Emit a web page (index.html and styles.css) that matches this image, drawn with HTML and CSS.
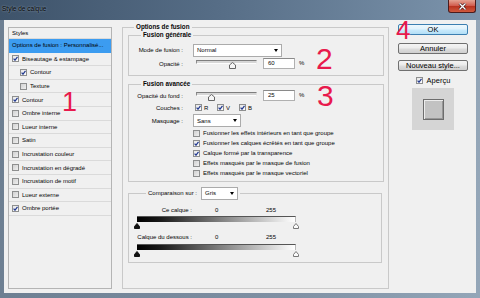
FILE: index.html
```html
<!DOCTYPE html>
<html lang="fr">
<head>
    <meta charset="UTF-8">
    <meta name="viewport" content="width=device-width, initial-scale=1.0">
    <title>Style de calque</title>
    <link rel="stylesheet" href="styles.css">
</head>
<body>
    <div class="window">
        <div class="titlebar">
            <span class="title">Style de calque</span>
            <span class="close">
                <svg width="9" height="7" viewBox="0 0 9 7"><path d="M1.5 0.5 L7.5 6.5 M7.5 0.5 L1.5 6.5" stroke="#3a1010" stroke-width="2.6"/><path d="M1.5 0.5 L7.5 6.5 M7.5 0.5 L1.5 6.5" stroke="#fff" stroke-width="1.4"/></svg>
            </span>
        </div>

        <div class="client">
            <ul class="style-list">
                <li class="list-head">Styles</li>
                <li class="selected">Options de fusion : Personnalisé...</li>
                <li><span class="cb"><svg viewBox="0 0 5 5"><path d="M0.6 2.6 L2 4.2 L4.5 0.8"/></svg></span>Biseautage &amp; estampage</li>
                <li class="sub"><span class="cb"><svg viewBox="0 0 5 5"><path d="M0.6 2.6 L2 4.2 L4.5 0.8"/></svg></span>Contour</li>
                <li class="sub"><span class="cb empty"></span>Texture</li>
                <li><span class="cb"><svg viewBox="0 0 5 5"><path d="M0.6 2.6 L2 4.2 L4.5 0.8"/></svg></span>Contour</li>
                <li><span class="cb empty"></span>Ombre interne</li>
                <li><span class="cb empty"></span>Lueur interne</li>
                <li><span class="cb empty"></span>Satin</li>
                <li><span class="cb empty"></span>Incrustation couleur</li>
                <li><span class="cb empty"></span>Incrustation en dégradé</li>
                <li><span class="cb empty"></span>Incrustation de motif</li>
                <li><span class="cb empty"></span>Lueur externe</li>
                <li><span class="cb"><svg viewBox="0 0 5 5"><path d="M0.6 2.6 L2 4.2 L4.5 0.8"/></svg></span>Ombre portée</li>
            </ul>

            <fieldset class="group outer">
                <legend>Options de fusion</legend>

                <fieldset class="group general">
                    <legend>Fusion générale</legend>
                    <div class="form-grid">
                        <label>Mode de fusion :</label>
                        <div class="select select-normal">Normal<span class="arrow"></span></div>
                        <label>Opacité :</label>
                        <div class="slider-row">
                            <div class="slider">
                                <span class="thumb" style="left: 60%"><svg width="7" height="7" viewBox="0 0 7 7"><path d="M3.5 0.5 L6.5 3 L6.5 6.5 L0.5 6.5 L0.5 3 Z"/></svg></span>
                            </div>
                            <div class="field">60</div>
                            <span class="unit">%</span>
                        </div>
                    </div>
                </fieldset>

                <fieldset class="group advanced">
                    <legend>Fusion avancée</legend>
                    <div class="form-grid">
                        <label>Opacité du fond :</label>
                        <div class="slider-row">
                            <div class="slider">
                                <span class="thumb" style="left: 25%"><svg width="7" height="7" viewBox="0 0 7 7"><path d="M3.5 0.5 L6.5 3 L6.5 6.5 L0.5 6.5 L0.5 3 Z"/></svg></span>
                            </div>
                            <div class="field">25</div>
                            <span class="unit">%</span>
                        </div>
                        <label>Couches :</label>
                        <div class="channels">
                            <span class="check"><span class="cb"><svg viewBox="0 0 5 5"><path d="M0.6 2.6 L2 4.2 L4.5 0.8"/></svg></span>R</span>
                            <span class="check"><span class="cb"><svg viewBox="0 0 5 5"><path d="M0.6 2.6 L2 4.2 L4.5 0.8"/></svg></span>V</span>
                            <span class="check"><span class="cb"><svg viewBox="0 0 5 5"><path d="M0.6 2.6 L2 4.2 L4.5 0.8"/></svg></span>B</span>
                        </div>
                        <label>Masquage :</label>
                        <div class="select select-sans">Sans<span class="arrow"></span></div>
                        <div class="option"><span class="cb empty"></span>Fusionner les effets intérieurs en tant que groupe</div>
                        <div class="option"><span class="cb"><svg viewBox="0 0 5 5"><path d="M0.6 2.6 L2 4.2 L4.5 0.8"/></svg></span>Fusionner les calques écrêtés en tant que groupe</div>
                        <div class="option"><span class="cb"><svg viewBox="0 0 5 5"><path d="M0.6 2.6 L2 4.2 L4.5 0.8"/></svg></span>Calque formé par la transparence</div>
                        <div class="option"><span class="cb empty"></span>Effets masqués par le masque de fusion</div>
                        <div class="option"><span class="cb empty"></span>Effets masqués par le masque vectoriel</div>
                    </div>
                </fieldset>

                <fieldset class="group compare">
                    <legend>
                        <span>Comparaison sur :</span>
                        <div class="select select-gris">Gris<span class="arrow"></span></div>
                    </legend>
                    <div class="blend-row">
                        <span class="blend-label">Ce calque :</span>
                        <span class="blend-min">0</span>
                        <span>255</span>
                    </div>
                    <div class="ramp"></div>
                    <div class="ramp-marks">
                        <svg width="6" height="6" viewBox="0 0 6 6"><path class="mark-dark" d="M3 0.5 L5.5 3.5 L5.5 5.5 L0.5 5.5 L0.5 3.5 Z"/></svg>
                        <svg width="6" height="6" viewBox="0 0 6 6"><path class="mark-light" d="M3 0.5 L5.5 3.5 L5.5 5.5 L0.5 5.5 L0.5 3.5 Z"/></svg>
                    </div>
                    <div class="blend-row second">
                        <span class="blend-label">Calque du dessous :</span>
                        <span class="blend-min">0</span>
                        <span>255</span>
                    </div>
                    <div class="ramp second"></div>
                    <div class="ramp-marks">
                        <svg width="6" height="6" viewBox="0 0 6 6"><path class="mark-dark" d="M3 0.5 L5.5 3.5 L5.5 5.5 L0.5 5.5 L0.5 3.5 Z"/></svg>
                        <svg width="6" height="6" viewBox="0 0 6 6"><path class="mark-light" d="M3 0.5 L5.5 3.5 L5.5 5.5 L0.5 5.5 L0.5 3.5 Z"/></svg>
                    </div>
                </fieldset>
            </fieldset>

            <div class="actions">
                <button class="btn btn-default">OK</button>
                <button class="btn btn-cancel">Annuler</button>
                <button class="btn btn-new">Nouveau style...</button>
                <div class="preview-toggle"><span class="cb"><svg viewBox="0 0 5 5"><path d="M0.6 2.6 L2 4.2 L4.5 0.8"/></svg></span>Aperçu</div>
                <div class="preview"><div class="preview-swatch"></div></div>
            </div>
        </div>

        <span class="mark mark-1">1</span>
        <span class="mark mark-2">2</span>
        <span class="mark mark-3">3</span>
        <span class="mark mark-4">4</span>
    </div>
</body>
</html>
```

FILE: styles.css
```css
* {
    margin: 0;
    padding: 0;
    box-sizing: border-box;
}

body {
    font-family: 'Liberation Sans', Arial, sans-serif;
    font-size: 6px;
    color: #050505;
    background-color: #5f7287;
    width: 480px;
    height: 298px;
    overflow: hidden;
}

.window {
    position: relative;
    width: 480px;
    height: 298px;
    display: flex;
    flex-direction: column;
    background: linear-gradient(90deg, #6d7f92, #7f91a4 60%, #94a6b8);
}

/* title bar */

.titlebar {
    height: 20px;
    display: flex;
    justify-content: space-between;
    align-items: flex-start;
    padding-left: 2px;
    background: linear-gradient(90deg, #3e536a 0%, #566d86 45%, #7c94ac 100%);
}

.title {
    font-size: 6.5px;
    line-height: 17px;
    color: #000;
    text-shadow: 0 0 2px rgba(220, 230, 240, 0.7);
}

.close {
    width: 28px;
    height: 13px;
    margin-right: 4px;
    display: flex;
    align-items: center;
    justify-content: center;
    border: 1px solid #4b1c1c;
    border-top: none;
    border-radius: 0 0 3px 3px;
    background: linear-gradient(#e4a393, #d0594a 50%, #b8321f 51%, #cf5a3e);
}

/* client area */

.client {
    flex: 1;
    display: flex;
    margin: 0 4px 5px 4px;
    padding: 3px 8px 4px 4px;
    background-color: #f0f0f0;
}

.style-list {
    list-style: none;
    width: 104px;
    margin-top: 4px;
    border: 1px solid #b4b4b4;
    background-color: #f0f0f0;
}

.style-list li {
    height: 13.6px;
    display: flex;
    align-items: center;
    gap: 3px;
    padding-left: 3px;
    border-bottom: 1px solid #dadada;
    white-space: nowrap;
}

.style-list .list-head {
    height: 11px;
}

.style-list .selected {
    background-color: #3c9cf0;
    border-bottom-color: #3c9cf0;
    color: #000;
}

.style-list .sub {
    padding-left: 11px;
}

/* checkboxes */

.cb {
    width: 7px;
    height: 7px;
    flex-shrink: 0;
    display: flex;
    align-items: center;
    justify-content: center;
    border: 1px solid #8e8f8f;
    background: linear-gradient(135deg, #e6e6e6, #fdfdfd);
}

.cb.empty {
    background: linear-gradient(135deg, #d2d2d2, #efefef);
}

.cb svg {
    width: 5px;
    height: 5px;
}

.cb path {
    fill: none;
    stroke: #22398f;
    stroke-width: 1.2;
}

/* group boxes */

.group {
    border: 1px solid #c9c9c9;
    padding: 0;
    min-width: 0;
}

.group legend {
    font-weight: bold;
    font-size: 6.3px;
    line-height: 8px;
    padding: 0 2px;
    margin-left: 12px;
}

.outer {
    width: 267px;
    margin-left: 10px;
    padding: 0 4px 0 5px;
}

.outer > legend {
    margin-left: 6px;
}

.general {
    padding: 4px 0 5px 0;
}

.advanced {
    margin-top: 4px;
    padding: 2px 0 3px 0;
}

.form-grid {
    display: grid;
    grid-template-columns: 54px 1fr;
    column-gap: 10px;
    align-items: center;
}

.general .form-grid {
    grid-template-rows: 14px 12px;
    row-gap: 1px;
}

.advanced .form-grid {
    grid-template-rows: 12px 11px 15px repeat(5, 10px);
}

.form-grid > label {
    text-align: right;
    white-space: nowrap;
}

.select {
    height: 13px;
    display: flex;
    align-items: center;
    justify-content: space-between;
    padding: 0 3px 0 3px;
    background-color: #fff;
    border: 1px solid #ababab;
}

.select-normal {
    width: 89px;
}

.select-sans {
    width: 48px;
}

.select-gris {
    width: 37px;
    font-weight: normal;
}

.arrow {
    width: 0;
    height: 0;
    border-left: 2.5px solid transparent;
    border-right: 2.5px solid transparent;
    border-top: 3px solid #000;
}

.slider-row {
    height: 12px;
    display: flex;
    align-items: flex-start;
}

.slider {
    position: relative;
    width: 61px;
    height: 4px;
    margin: 2px 0 0 3px;
    border: 1px solid;
    border-color: #7e7e7e #e2e2e2 #fdfdfd #8c8c8c;
    background-color: #d6d6d6;
}

.thumb {
    position: absolute;
    top: 1px;
    width: 7px;
    height: 7px;
    margin-left: -3.5px;
}

.thumb path {
    fill: #f6f6f6;
    stroke: #666;
    stroke-width: 1;
}

.field {
    width: 32px;
    height: 11px;
    margin-left: 6px;
    padding-left: 4px;
    line-height: 9px;
    background-color: #fff;
    border: 1px solid #b0b0b0;
    border-top-color: #8a8a8a;
}

.unit {
    margin-left: 4px;
    line-height: 11px;
}

.channels {
    display: flex;
    padding-left: 2px;
}

.check {
    display: flex;
    align-items: center;
    gap: 2px;
    width: 22px;
}

.option {
    grid-column: 2;
    display: flex;
    align-items: center;
    gap: 3px;
    white-space: nowrap;
}

/* blending range */

.compare {
    margin: 5px 2px 0 0;
    padding: 6px 0 5px 0;
}

.compare legend {
    display: flex;
    align-items: center;
    gap: 4px;
    margin-left: 17px;
    font-weight: normal;
    font-size: 6px;
    line-height: 13px;
}

.blend-row {
    height: 8px;
    display: flex;
    align-items: center;
}

.blend-row.second {
    margin-top: 4px;
}

.blend-label {
    width: 63px;
    text-align: right;
    white-space: nowrap;
}

.blend-min {
    width: 51px;
    margin-left: 23px;
}

.ramp {
    width: 159px;
    height: 6px;
    margin: 2px 0 0 8px;
    border-top: 1px solid #555;
    border-right: 1px solid #b8b8b8;
    background: linear-gradient(90deg, #000 0%, #1a1a1a 15%, #fff 100%);
}

.ramp.second {
    margin-top: 3px;
}

.ramp-marks {
    width: 165px;
    height: 6px;
    margin: 1px 0 0 5px;
    display: flex;
    justify-content: space-between;
}

.mark-dark {
    fill: #111;
    stroke: #111;
}

.mark-light {
    fill: #fafafa;
    stroke: #777;
}

/* right column */

.actions {
    width: 70px;
    margin-left: 9px;
    display: flex;
    flex-direction: column;
    align-items: center;
}

.btn {
    width: 70px;
    height: 11px;
    font-family: inherit;
    font-size: 7.5px;
    line-height: 9px;
    color: #000;
    text-align: center;
    border: 1px solid #707070;
    border-radius: 2px;
    background: linear-gradient(#f4f4f4 0%, #ebebeb 48%, #dddddd 52%, #cfcfcf 100%);
}

.btn-default {
    margin-top: 1px;
    border-color: #3c7fb1;
    background: linear-gradient(#eef8fd 0%, #dff2fc 48%, #c9eafc 52%, #b3dff6 100%);
}

.btn-cancel {
    margin-top: 8px;
}

.btn-new {
    margin-top: 6px;
}

.preview-toggle {
    height: 8px;
    margin-top: 5px;
    display: flex;
    align-items: center;
    gap: 4px;
    font-size: 7.5px;
}

.preview {
    width: 42px;
    height: 42px;
    margin-top: 4px;
    display: flex;
    align-items: center;
    justify-content: center;
    background-color: #d5d5d5;
}

.preview-swatch {
    width: 21px;
    height: 21px;
    background-color: #c2c2c2;
    border: 1px solid #6d6d6d;
    box-shadow: inset 1px 1px 0 #ececec, inset -1px -1px 0 #979797;
}

/* red annotations laid over the dialog */

.mark {
    position: absolute;
    line-height: 1;
    color: #e8194c;
}

.mark-1 {
    left: 62px;
    top: 89px;
    font-size: 27px;
}

.mark-2 {
    left: 316px;
    top: 44px;
    font-size: 30px;
}

.mark-3 {
    left: 317px;
    top: 81px;
    font-size: 30px;
}

.mark-4 {
    left: 396px;
    top: 17px;
    font-size: 26px;
}
```
